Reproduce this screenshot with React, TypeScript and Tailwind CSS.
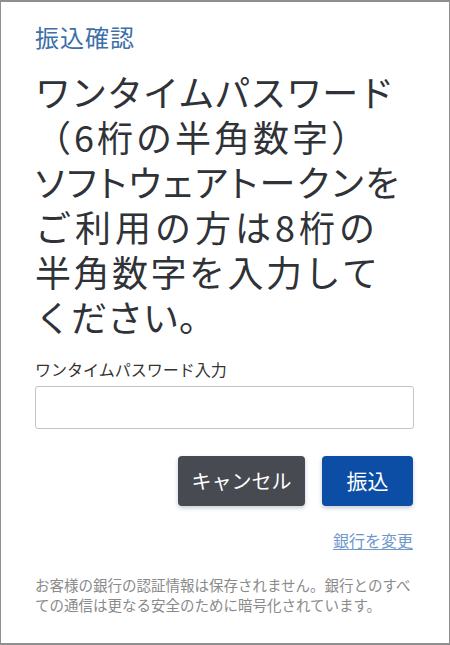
const jp = "font-['Noto_Sans_CJK_JP','Noto_Sans',sans-serif]";

export default function App() {
  return (
    <div
      className={`${jp} w-[450px] h-[645px] bg-white border border-t-2 border-b-2 border-[#8f8f8f] px-[34px] flex flex-col`}
    >
      <h2 className="mt-[18px] text-[24px] leading-[34px] text-[#3d6fa8] tracking-[1px]">
        振込確認
      </h2>

      {/* heading lines are spaced one by one to follow the original wrap */}
      <h1 className="mt-[15px] text-[36px] leading-[45px] text-[#2f3237] whitespace-nowrap">
        <span className="block">ワンタイムパスワード</span>
        <span className="block tracking-[3px]">（6桁の半角数字）</span>
        <span className="block tracking-[2px] [font-feature-settings:'palt']">
          ソフトウェアトークンを
        </span>
        <span className="block tracking-[4px]">ご利用の方は8桁の</span>
        <span className="block tracking-[2.5px]">半角数字を入力して</span>
        <span className="block">ください。</span>
      </h1>

      <label className="mt-[18px] text-[16px] leading-[24px] text-[#333]">
        ワンタイムパスワード入力
      </label>
      <input
        type="password"
        className="mt-[5px] h-[43px] w-[379px] rounded-[3px] border border-[#c4c4c4] px-3 text-[16px] outline-none"
      />

      <div className="mt-[27px] flex justify-end gap-[17px] pr-[2px]">
        <button className="w-[127px] h-[50px] rounded-[4px] bg-[#474a51] text-white text-[20px] shadow-[0_2px_4px_rgba(60,80,120,0.3)]">
          キャンセル
        </button>
        <button className="w-[91px] h-[50px] rounded-[4px] bg-[#0c4ea6] text-white text-[21px] shadow-[0_2px_4px_rgba(60,80,120,0.3)]">
          振込
        </button>
      </div>

      <div className="mt-[22px] flex justify-end pr-[2px]">
        <a
          href="#"
          className="text-[16px] leading-[24px] text-[#7098cb] underline underline-offset-2"
        >
          銀行を変更
        </a>
      </div>

      <p className="mt-[23px] text-[14.5px] leading-[20px] text-[#8a8a8a]">
        お客様の銀行の認証情報は保存されません。銀行とのすべての通信は更なる安全のために暗号化されています。
      </p>
    </div>
  );
}
